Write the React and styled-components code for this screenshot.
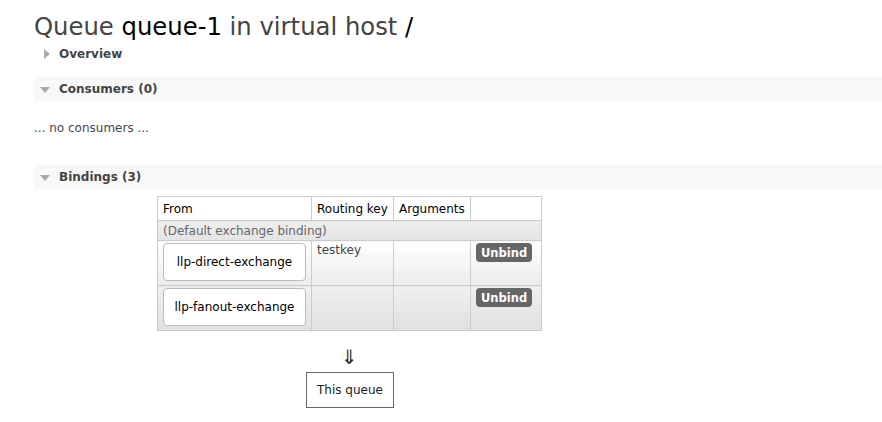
import React from "react";
import styled, { createGlobalStyle } from "styled-components";

const Global = createGlobalStyle`
  html, body { margin: 0; padding: 0; background: #fff; }
  body { font-family: "DejaVu Sans", Verdana, sans-serif; font-size: 12px; color: #484848; }
`;

const Main = styled.div`
  padding: 12px 0 0 34px;
`;

const Title = styled.h1`
  margin: 0;
  font-weight: normal;
  font-size: 24.3px;
  line-height: 30px;
  color: #444;
  b { font-weight: normal; color: #000; }
`;

const Section = styled.div`
  margin-top: ${(p) => p.$mt || 0}px;
`;

const SectionHead = styled.div`
  display: flex;
  align-items: center;
  height: 24px;
  padding-left: ${(p) => (p.$open ? 6 : 10)}px;
  background: ${(p) => (p.$open ? "#f8f8f8" : "transparent")};
  font-weight: bold;
  font-size: 12px;
  color: #444;
  gap: 9px;
`;

const Tri = styled.span`
  display: inline-block;
  width: 0;
  height: 0;
  ${(p) =>
    p.$open
      ? `border-left: 5px solid transparent; border-right: 5px solid transparent; border-top: 6px solid #aaa; margin-top: 1px;`
      : `border-top: 5px solid transparent; border-bottom: 5px solid transparent; border-left: 6px solid #aaa;`}
`;

const Empty = styled.p`
  margin: 0;
  padding: 20px 0 0 0;
  height: 44px;
  font-size: 12px;
  color: #484848;
`;

const Bindings = styled.div`
  display: flex;
  flex-direction: column;
  align-items: flex-start;
  padding: 7px 0 0 123px;
`;

const Table = styled.table`
  border-collapse: collapse;
  font-size: 12px;
  th, td { border: 1px solid #ccc; text-align: left; vertical-align: top; }
`;

const Th = styled.th`
  font-weight: normal;
  color: #000;
  background: #fff;
  height: 23px;
  padding: 0 5px;
  width: ${(p) => p.$w}px;
  vertical-align: middle !important;
`;

const DefRow = styled.tr`
  td {
    background: linear-gradient(#eee, #e4e4e4);
    color: #666;
    height: 19px;
    padding: 0 5px;
    vertical-align: middle;
  }
`;

const Row = styled.tr`
  td {
    background: ${(p) =>
      p.$alt ? "linear-gradient(#f0f0f0, #e0e0e0)" : "linear-gradient(#fff, #ececec)"};
    height: 40px;
    padding: 2px 5px;
    color: #444;
  }
`;

const ExBox = styled.div`
  width: 143px;
  height: 38px;
  box-sizing: border-box;
  border: 1px solid #bbb;
  border-radius: 4px;
  background: #fff;
  color: #000;
  display: flex;
  align-items: center;
  justify-content: center;
`;

const Unbind = styled.button`
  font-family: inherit;
  font-weight: bold;
  font-size: 11.5px;
  color: #fff;
  background: #666;
  border: none;
  border-radius: 4px;
  height: 19px;
  padding: 0 5px;
  cursor: pointer;
`;

const Arrow = styled.div`
  width: 385px;
  text-align: center;
  font-size: 20px;
  color: #222;
  line-height: 22px;
  margin-top: 15px;
`;

const QueueBox = styled.div`
  margin-left: 149px;
  margin-top: 4px;
  border: 1px solid #666;
  padding: 10px 10px;
  color: #222;
`;

export default function App() {
  return (
    <Main>
      <Global />
      <Title>
        Queue <b>queue-1</b> in virtual host <b>/</b>
      </Title>
      <Section>
        <SectionHead>
          <Tri />
          Overview
        </SectionHead>
      </Section>
      <Section $mt={11}>
        <SectionHead $open>
          <Tri $open />
          Consumers (0)
        </SectionHead>
        <Empty>... no consumers ...</Empty>
      </Section>
      <Section>
        <SectionHead $open>
          <Tri $open />
          Bindings (3)
        </SectionHead>
        <Bindings>
          <Table>
            <thead>
              <tr>
                <Th $w={143}>From</Th>
                <Th $w={71}>Routing key</Th>
                <Th $w={66}>Arguments</Th>
                <Th $w={60}></Th>
              </tr>
            </thead>
            <tbody>
              <DefRow>
                <td colSpan={4}>(Default exchange binding)</td>
              </DefRow>
              <Row>
                <td><ExBox>llp-direct-exchange</ExBox></td>
                <td>testkey</td>
                <td></td>
                <td><Unbind>Unbind</Unbind></td>
              </Row>
              <Row $alt>
                <td><ExBox>llp-fanout-exchange</ExBox></td>
                <td></td>
                <td></td>
                <td><Unbind>Unbind</Unbind></td>
              </Row>
            </tbody>
          </Table>
          <Arrow>⇓</Arrow>
          <QueueBox>This queue</QueueBox>
        </Bindings>
      </Section>
    </Main>
  );
}
